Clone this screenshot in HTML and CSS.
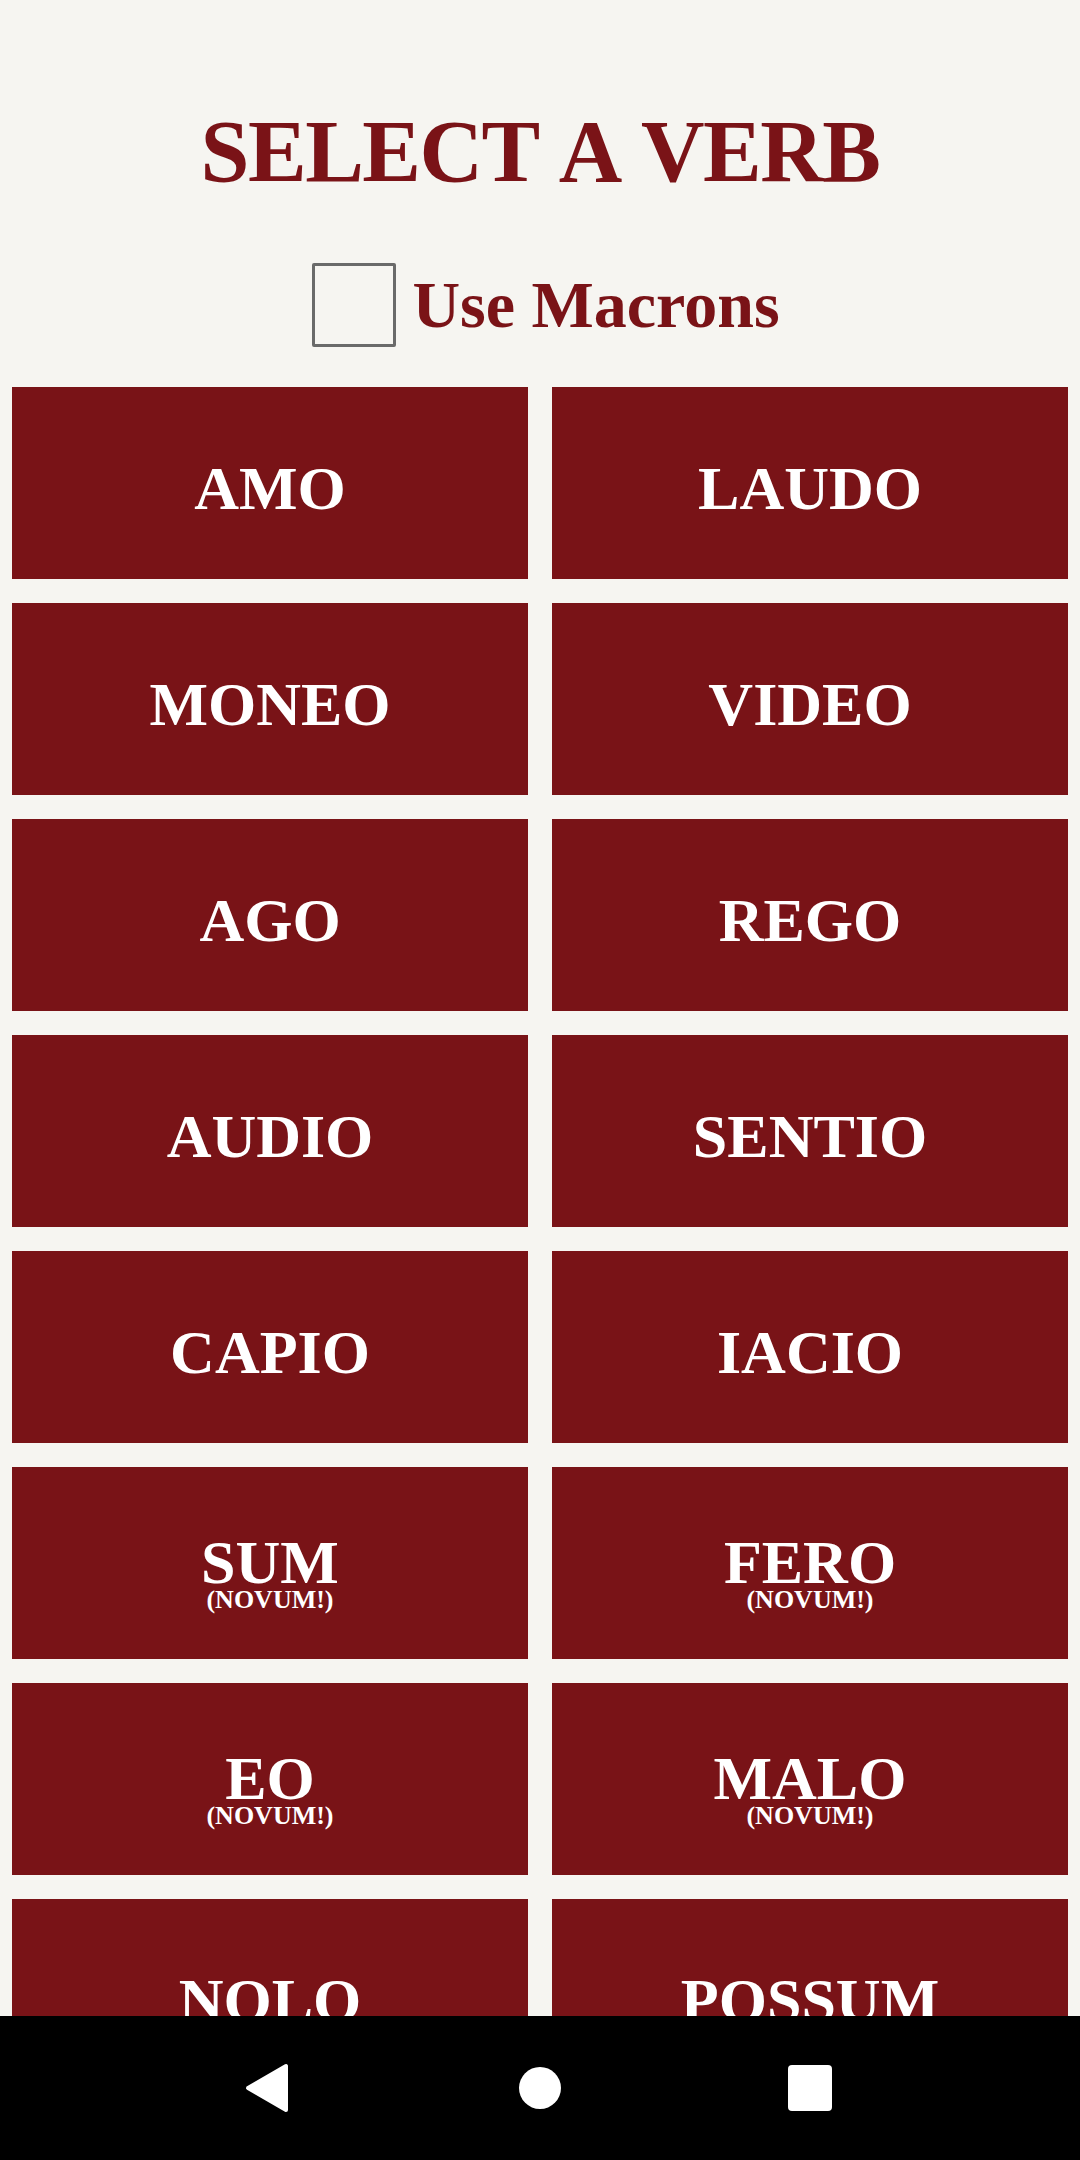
FILE: index.html
```html
<!DOCTYPE html>
<html lang="en">
<head>
<meta charset="utf-8">
<title>Select a Verb</title>
<link rel="stylesheet" href="styles.css">
</head>
<body>
<main class="page">
  <header class="header">
    <h1 class="title">SELECT A VERB</h1>
    <label class="macron-toggle">
      <span class="checkbox"></span>
      <span class="macron-label">Use Macrons</span>
    </label>
  </header>
  <section class="verb-grid">
    <button class="verb"><span class="verb-name">AMO</span></button>
    <button class="verb"><span class="verb-name">LAUDO</span></button>
    <button class="verb"><span class="verb-name">MONEO</span></button>
    <button class="verb"><span class="verb-name">VIDEO</span></button>
    <button class="verb"><span class="verb-name">AGO</span></button>
    <button class="verb"><span class="verb-name">REGO</span></button>
    <button class="verb"><span class="verb-name">AUDIO</span></button>
    <button class="verb"><span class="verb-name">SENTIO</span></button>
    <button class="verb"><span class="verb-name">CAPIO</span></button>
    <button class="verb"><span class="verb-name">IACIO</span></button>
    <button class="verb verb-novum"><span class="verb-name">SUM</span><span class="verb-new">(NOVUM!)</span></button>
    <button class="verb verb-novum"><span class="verb-name">FERO</span><span class="verb-new">(NOVUM!)</span></button>
    <button class="verb verb-novum"><span class="verb-name">EO</span><span class="verb-new">(NOVUM!)</span></button>
    <button class="verb verb-novum"><span class="verb-name">MALO</span><span class="verb-new">(NOVUM!)</span></button>
    <button class="verb"><span class="verb-name">NOLO</span></button>
    <button class="verb"><span class="verb-name">POSSUM</span></button>
  </section>
</main>
<nav class="navbar">
  <span class="nav-item">
    <svg width="46" height="52" viewBox="0 0 46 52"><path d="M42 4 L42 48 L4 26 Z" fill="#fff" stroke="#fff" stroke-width="4" stroke-linejoin="round"/></svg>
  </span>
  <span class="nav-item"><span class="nav-home"></span></span>
  <span class="nav-item"><span class="nav-recent"></span></span>
</nav>
</body>
</html>
```

FILE: styles.css
```css
html, body {
  margin: 0;
  padding: 0;
  background: #f6f5f1;
}
body {
  height: 2160px;
  overflow: hidden;
  font-family: "Liberation Serif", "Times New Roman", serif;
}
.page {
  display: flex;
  flex-direction: column;
}
.header {
  display: flex;
  flex-direction: column;
  align-items: center;
  padding-top: 108px;
}
.title {
  margin: 0;
  font-size: 88px;
  line-height: 88px;
  font-weight: 700;
  letter-spacing: -1.5px;
  word-spacing: 6px;
  color: #7a1317;
}
.macron-toggle {
  display: flex;
  align-items: center;
  gap: 16px;
  margin-top: 67px;
  padding-left: 12px;
}
.checkbox {
  width: 78px;
  height: 78px;
  border: 3px solid #6a6a6a;
  border-radius: 2px;
  box-sizing: content-box;
}
.macron-label {
  font-size: 66px;
  line-height: 66px;
  font-weight: 700;
  color: #7a1317;
}
.verb-grid {
  display: grid;
  grid-template-columns: 1fr 1fr;
  grid-auto-rows: 192px;
  gap: 24px;
  padding: 0 12px;
  margin-top: 40px;
}
.verb {
  display: flex;
  flex-direction: column;
  align-items: center;
  justify-content: center;
  padding: 10px 0 0;
  margin: 0;
  border: 0;
  border-radius: 0;
  background: #791317;
  color: #fff;
  font-family: "Liberation Serif", "Times New Roman", serif;
}
.verb-name {
  font-size: 62px;
  line-height: 62px;
  font-weight: 700;
}
.verb-novum {
  padding-top: 18px;
}
.verb-novum .verb-name {
  line-height: 56px;
}
.verb-new {
  font-size: 26px;
  line-height: 20px;
  font-weight: 700;
}
.navbar {
  position: fixed;
  left: 0;
  right: 0;
  bottom: 0;
  height: 144px;
  background: #000;
  display: grid;
  grid-template-columns: 270px 270px 270px;
  justify-content: center;
  align-items: center;
}
.nav-item {
  display: flex;
  justify-content: center;
  align-items: center;
}
.nav-item svg {
  margin-left: -6px;
}
.nav-home {
  width: 42px;
  height: 42px;
  border-radius: 50%;
  background: #fff;
}
.nav-recent {
  width: 44px;
  height: 46px;
  border-radius: 4px;
  background: #fff;
}
```
